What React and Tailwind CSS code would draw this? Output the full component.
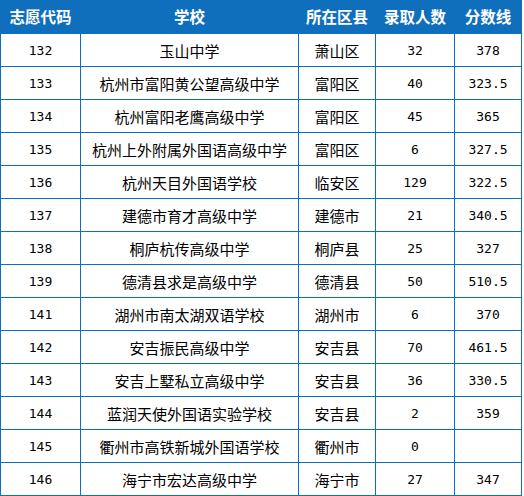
import React from "react";

const rows = [
  ["132", "玉山中学", "萧山区", "32", "378"],
  ["133", "杭州市富阳黄公望高级中学", "富阳区", "40", "323.5"],
  ["134", "杭州富阳老鹰高级中学", "富阳区", "45", "365"],
  ["135", "杭州上外附属外国语高级中学", "富阳区", "6", "327.5"],
  ["136", "杭州天目外国语学校", "临安区", "129", "322.5"],
  ["137", "建德市育才高级中学", "建德市", "21", "340.5"],
  ["138", "桐庐杭传高级中学", "桐庐县", "25", "327"],
  ["139", "德清县求是高级中学", "德清县", "50", "510.5"],
  ["141", "湖州市南太湖双语学校", "湖州市", "6", "370"],
  ["142", "安吉振民高级中学", "安吉县", "70", "461.5"],
  ["143", "安吉上墅私立高级中学", "安吉县", "36", "330.5"],
  ["144", "蓝润天使外国语实验学校", "安吉县", "2", "359"],
  ["145", "衢州市高铁新城外国语学校", "衢州市", "0", ""],
  ["146", "海宁市宏达高级中学", "海宁市", "27", "347"],
];

const headers = ["志愿代码", "学校", "所在区县", "录取人数", "分数线"];

const cjk = "font-['Noto_Sans_CJK_SC',sans-serif]";
const num = "font-['DejaVu_Sans_Mono','Liberation_Mono',monospace]";

export default function App() {
  return (
    <div className="w-[524px] h-[496px] bg-white">
      <div className="w-[522px] grid grid-cols-[79px_217px_76px_78px_66px] gap-px p-px bg-[#0f6fbd]">
        {headers.map((h) => (
          <div
            key={h}
            className={`h-[32px] flex items-center justify-center bg-[#0f6fbd] text-white font-bold text-[15.5px] leading-none ${cjk}`}
          >
            {h}
          </div>
        ))}
        {rows.map((r) =>
          r.map((c, i) => (
            <div
              key={r[0] + "-" + i}
              className={`h-[32px] flex items-center justify-center bg-white text-black leading-none ${
                i === 0 || i === 3 || i === 4 ? `${num} text-[13px]` : `${cjk} text-[15px]`
              }`}
            >
              {c}
            </div>
          ))
        )}
      </div>
    </div>
  );
}
